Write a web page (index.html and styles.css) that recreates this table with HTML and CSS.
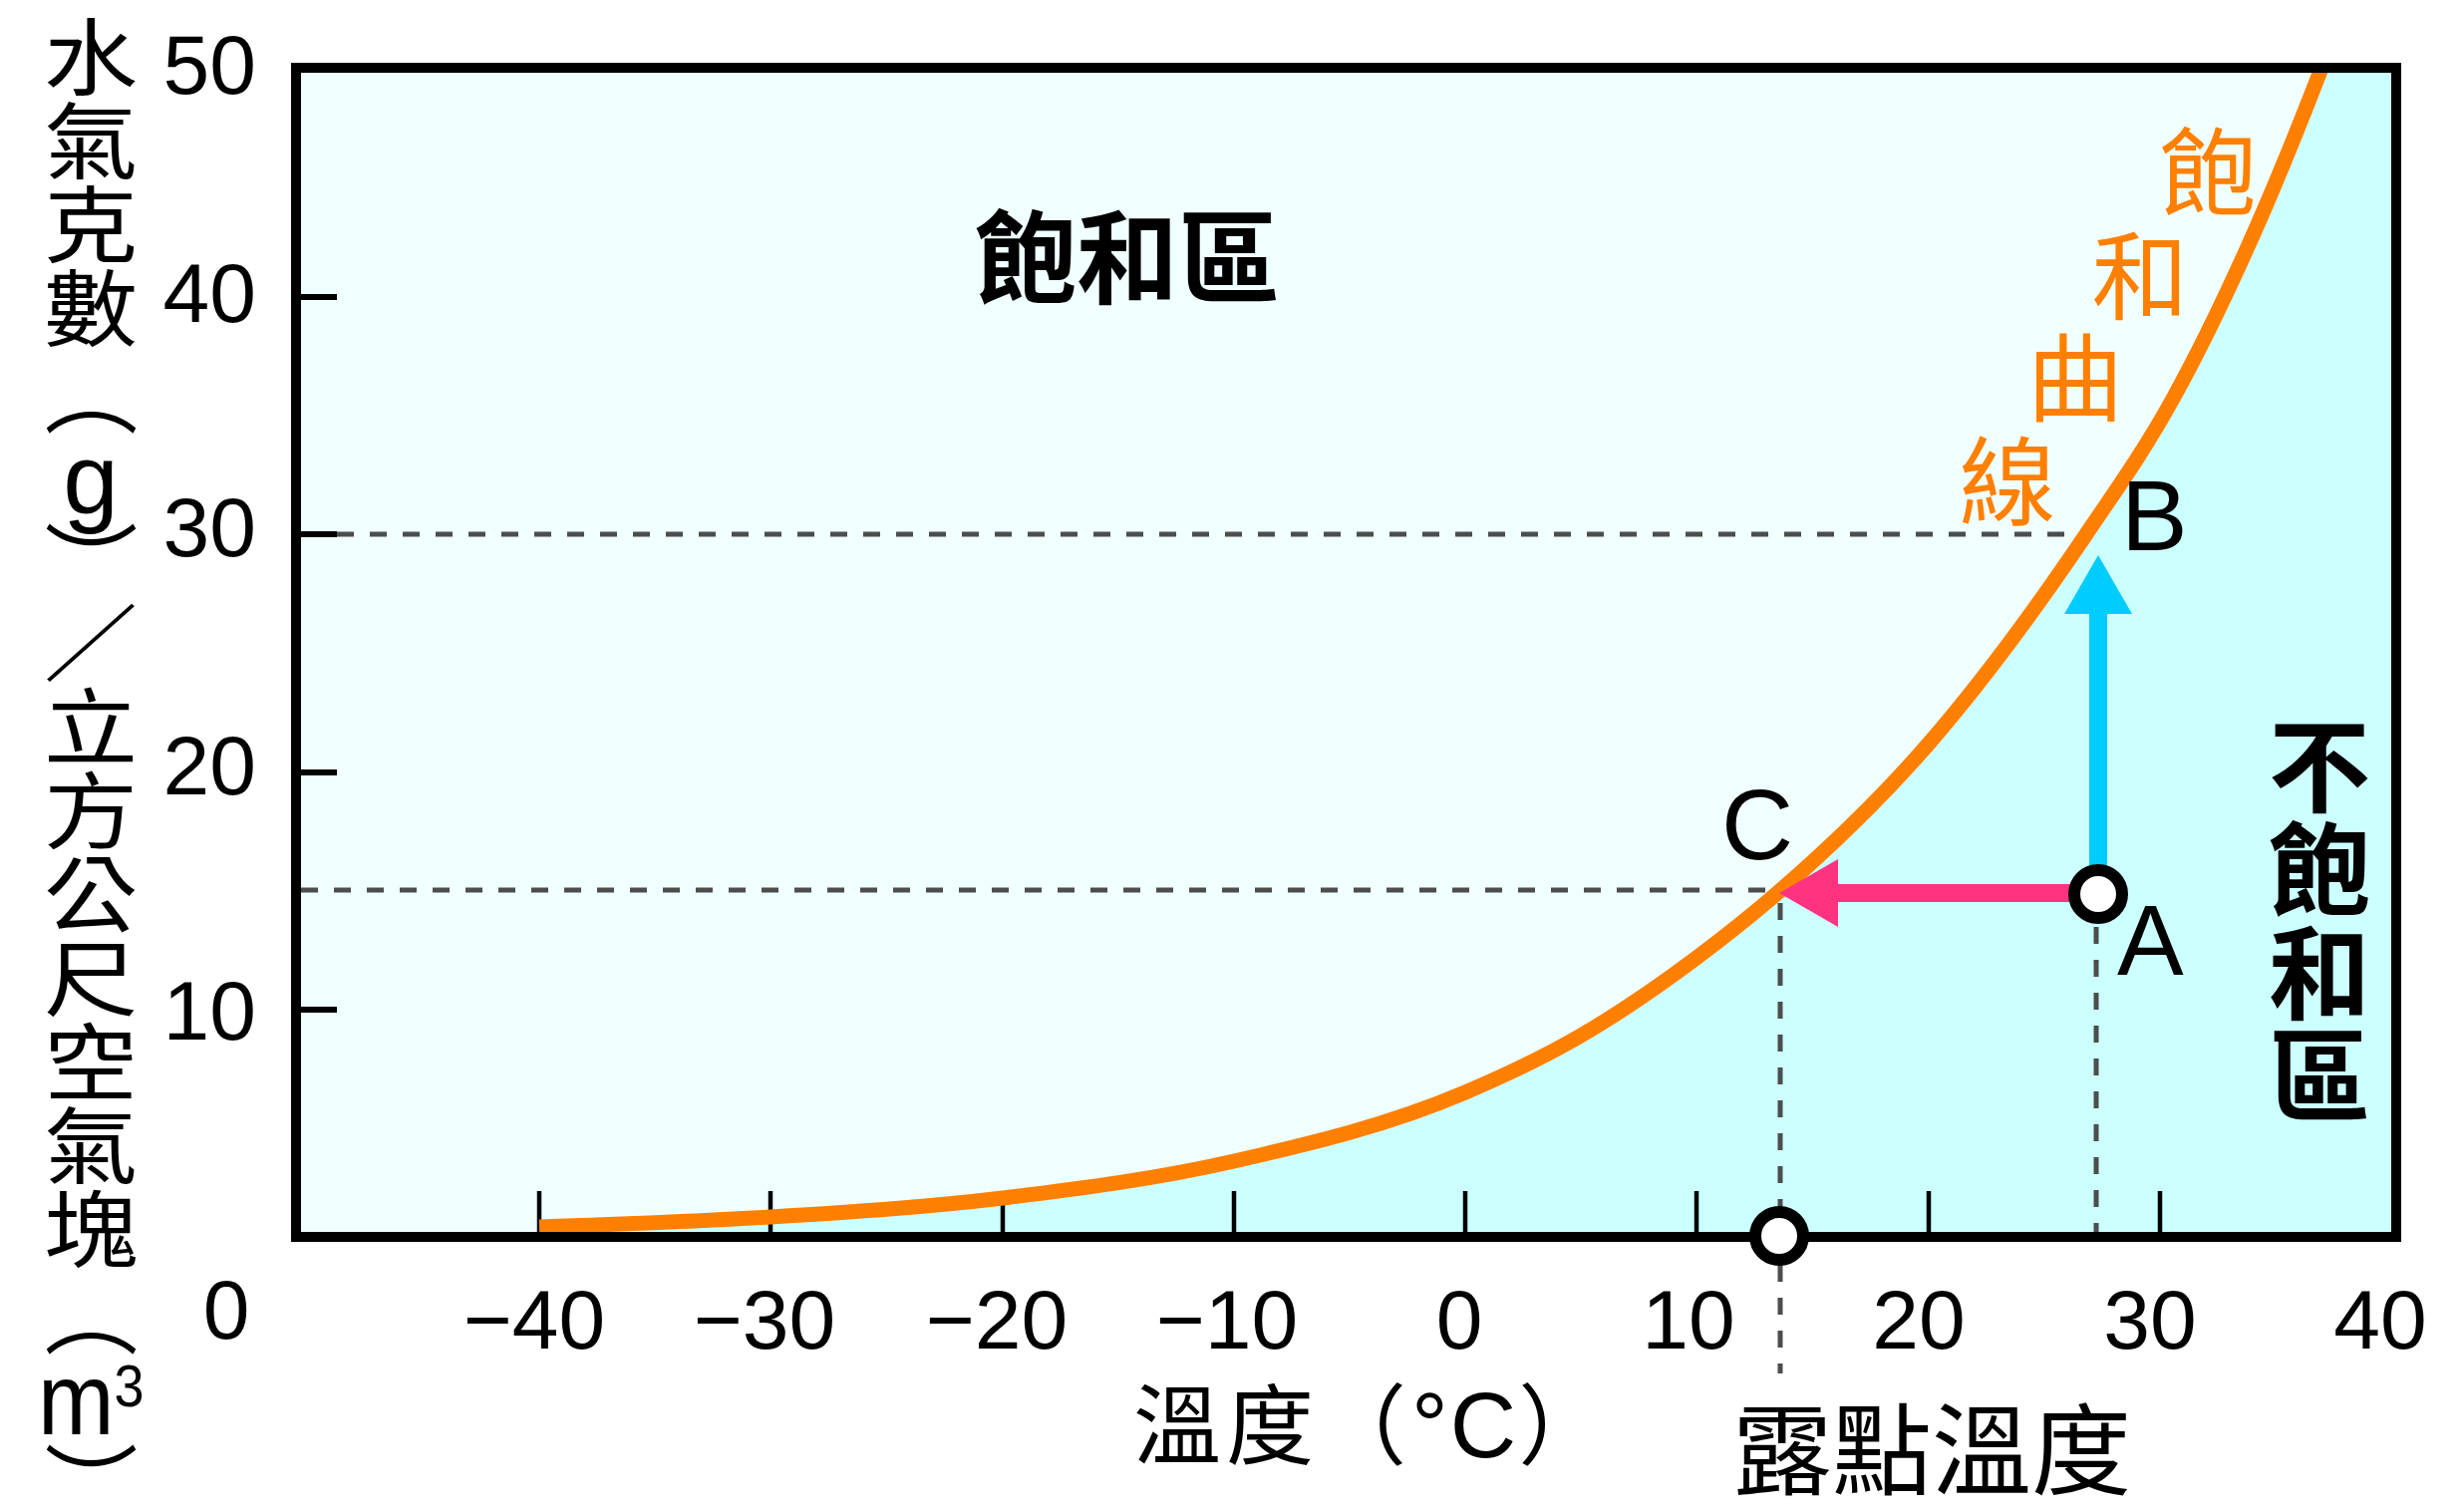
FILE: index.html
```html
<!DOCTYPE html>
<html lang="zh-Hant">
<head>
<meta charset="utf-8">
<title>飽和曲線</title>
<link rel="stylesheet" href="styles.css">
</head>
<body>
<div class="figure">
  <div class="ytitle">
    <span class="ch">水</span>
    <span class="ch">氣</span>
    <span class="ch">克</span>
    <span class="ch">數</span>
    <span class="ch vform">（</span>
    <span class="ch latin">g</span>
    <span class="ch vform">）</span>
    <span class="ch">／</span>
    <span class="ch">立</span>
    <span class="ch">方</span>
    <span class="ch">公</span>
    <span class="ch">尺</span>
    <span class="ch">空</span>
    <span class="ch">氣</span>
    <span class="ch">塊</span>
    <span class="ch vform">（</span>
    <span class="unit">m<span class="sup">3</span></span>
    <span class="ch vform last">）</span>
  </div>
  <svg class="chart" width="2321" height="1517" viewBox="150 0 2321 1517" xmlns="http://www.w3.org/2000/svg">
    <defs>
      <clipPath id="plot"><rect x="302" y="72" width="2097" height="1164"/></clipPath>
    </defs>

    <rect class="plot-bg" x="297" y="68" width="2107" height="1173"/>
    <path class="unsat" clip-path="url(#plot)" d="M541,1245 L541,1231 C618.3,1228.3 695.7,1225.8 773,1221 C850.7,1216.2 928.3,1211.4 1006,1202 C1083.3,1192.7 1160.7,1182.7 1238,1165 C1315.3,1147.3 1392.7,1129 1470,1096 C1508.7,1079.5 1547.3,1061.5 1586,1039 C1624.7,1016.5 1663.3,989.9 1702,961 C1730,940 1758,917.9 1786,893.5 C1835.7,850.3 1885.3,803.3 1935,746 C1987.7,685.2 2040.3,614 2093,536 C2122,493.1 2151,452.6 2180,400 C2204.7,355.3 2229.3,304.8 2254,250 C2278.7,195.2 2303.3,135.1 2328,71 L2345,27 L2420,27 L2420,1245 Z"/>

    <!-- guide lines -->
    <line class="guide" x1="338" y1="536" x2="2081" y2="536"/>
    <line class="guide" x1="302" y1="893" x2="1786" y2="893"/>
    <line class="guide" x1="1786" y1="906" x2="1786" y2="1378"/>
    <line class="guide" x1="2103" y1="930" x2="2103" y2="1236"/>

    <!-- ticks -->
    <line class="tick" x1="302" y1="298" x2="338" y2="298"/>
    <line class="tick" x1="302" y1="536" x2="338" y2="536"/>
    <line class="tick" x1="302" y1="775" x2="338" y2="775"/>
    <line class="tick" x1="302" y1="1013" x2="338" y2="1013"/>
    <line class="tick tick-x" x1="541" y1="1195" x2="541" y2="1236"/>
    <line class="tick tick-x" x1="773" y1="1195" x2="773" y2="1236"/>
    <line class="tick tick-x" x1="1006" y1="1195" x2="1006" y2="1236"/>
    <line class="tick tick-x" x1="1238" y1="1195" x2="1238" y2="1236"/>
    <line class="tick tick-x" x1="1470" y1="1195" x2="1470" y2="1236"/>
    <line class="tick tick-x" x1="1702" y1="1195" x2="1702" y2="1236"/>
    <line class="tick tick-x" x1="1935" y1="1195" x2="1935" y2="1236"/>
    <line class="tick tick-x" x1="2167" y1="1195" x2="2167" y2="1236"/>

    <!-- saturation curve -->
    <path class="curve" clip-path="url(#plot)" d="M541,1231 C618.3,1228.3 695.7,1225.8 773,1221 C850.7,1216.2 928.3,1211.4 1006,1202 C1083.3,1192.7 1160.7,1182.7 1238,1165 C1315.3,1147.3 1392.7,1129 1470,1096 C1508.7,1079.5 1547.3,1061.5 1586,1039 C1624.7,1016.5 1663.3,989.9 1702,961 C1730,940 1758,917.9 1786,893.5 C1835.7,850.3 1885.3,803.3 1935,746 C1987.7,685.2 2040.3,614 2093,536 C2122,493.1 2151,452.6 2180,400 C2204.7,355.3 2229.3,304.8 2254,250 C2278.7,195.2 2303.3,135.1 2328,71 L2345,27"/>

    <!-- frame -->
    <rect class="frame" x="297" y="68" width="2107" height="1173"/>

    <!-- arrows -->
    <line class="shaft-pink" x1="2105" y1="896" x2="1840" y2="896"/>
    <polygon class="head-pink" points="1785,896 1844,862 1844,930"/>
    <line class="shaft-cyan" x1="2105" y1="896" x2="2105" y2="612"/>
    <polygon class="head-cyan" points="2105,557 2071,616 2139,616"/>

    <!-- points -->
    <circle class="dot" cx="2105" cy="897" r="24"/>
    <circle class="dot" cx="1785" cy="1240" r="24"/>

    <!-- y tick labels -->
    <text class="num" x="257" y="94" text-anchor="end">50</text>
    <text class="num" x="257" y="323" text-anchor="end">40</text>
    <text class="num" x="257" y="558" text-anchor="end">30</text>
    <text class="num" x="257" y="797" text-anchor="end">20</text>
    <text class="num" x="257" y="1043" text-anchor="end">10</text>
    <text class="num" x="227" y="1343" text-anchor="middle">0</text>

    <!-- x tick labels -->
    <text class="num" x="536" y="1353" text-anchor="middle">−40</text>
    <text class="num" x="767" y="1353" text-anchor="middle">−30</text>
    <text class="num" x="1000" y="1353" text-anchor="middle">−20</text>
    <text class="num" x="1231" y="1353" text-anchor="middle">−10</text>
    <text class="num" x="1464" y="1353" text-anchor="middle">0</text>
    <text class="num" x="1694" y="1353" text-anchor="middle">10</text>
    <text class="num" x="1925" y="1353" text-anchor="middle">20</text>
    <text class="num" x="2157" y="1353" text-anchor="middle">30</text>
    <text class="num" x="2388" y="1353" text-anchor="middle">40</text>

    <!-- point labels -->
    <text class="letter" x="2124" y="978">A</text>
    <text class="letter" x="2128" y="552">B</text>
    <text class="letter" x="1727" y="862">C</text>

    <!-- region labels -->
    <text class="region" x="978" y="297">飽和區</text>
    <text class="region" x="2327" y="807" text-anchor="middle">不</text>
    <text class="region" x="2327" y="911" text-anchor="middle">飽</text>
    <text class="region" x="2327" y="1015" text-anchor="middle">和</text>
    <text class="region" x="2327" y="1118" text-anchor="middle">區</text>

    <!-- curve label -->
    <text class="curve-label" x="2215" y="209" text-anchor="middle">飽</text>
    <text class="curve-label" x="2147" y="313" text-anchor="middle">和</text>
    <text class="curve-label" x="2082" y="415" text-anchor="middle">曲</text>
    <text class="curve-label" x="2014" y="519" text-anchor="middle">線</text>

    <!-- axis titles -->
    <text class="axis-title" x="1137" y="1462">溫度（<tspan class="unit-c">°C</tspan>）</text>
    <text class="dew" x="1738" y="1492">露點溫度</text>
  </svg>
</div>
</body>
</html>
```

FILE: styles.css
```css
html, body {
  margin: 0;
  padding: 0;
  background: #ffffff;
  overflow: hidden;
}

.figure {
  display: flex;
  width: 2471px;
  height: 1517px;
}

.ytitle {
  width: 150px;
  flex: 0 0 150px;
  box-sizing: border-box;
  padding: 18px 0 0 32px;
  display: flex;
  flex-direction: column;
  align-items: center;
  font-family: "Liberation Sans", "Noto Sans CJK TC", sans-serif;
  font-size: 84px;
  color: #000;
}

.ytitle .ch {
  display: block;
  width: 84px;
  height: 84px;
  line-height: 84px;
  text-align: center;
  transform: scaleX(1.12);
}

.ytitle .vform {
  writing-mode: vertical-rl;
  font-family: "Noto Sans CJK TC", sans-serif;
}

.ytitle .vform.last {
  height: 60px;
}

.ytitle .latin {
  font-size: 100px;
  transform: none;
}

.ytitle .unit {
  display: block;
  height: 84px;
  line-height: 84px;
  font-size: 102px;
  white-space: nowrap;
  transform: scaleX(0.9);
}

.ytitle .sup {
  font-size: 60px;
  line-height: 0;
  vertical-align: 28px;
}

.chart {
  display: block;
  flex: 0 0 2321px;
}

.plot-bg { fill: #F0FFFF; }
.unsat { fill: #CCFFFF; }

.curve {
  fill: none;
  stroke: #FF8000;
  stroke-width: 15;
  stroke-linecap: butt;
}

.frame {
  fill: none;
  stroke: #000;
  stroke-width: 10;
}

.tick {
  stroke: #000;
  stroke-width: 6;
}
.tick-x { stroke-width: 4.5; }

.guide {
  fill: none;
  stroke: #4D4D4D;
  stroke-width: 5;
  stroke-dasharray: 17 16;
}

.shaft-pink { stroke: #FF3380; stroke-width: 18; }
.head-pink { fill: #FF3380; }
.shaft-cyan { stroke: #00CCFF; stroke-width: 18; }
.head-cyan { fill: #00CCFF; }

.dot {
  fill: #fff;
  stroke: #000;
  stroke-width: 12;
}

.num {
  font-family: "Liberation Sans", Arial, sans-serif;
  font-size: 84px;
  fill: #000;
}

.letter {
  font-family: "Liberation Sans", Arial, sans-serif;
  font-size: 100px;
  fill: #000;
}

.region {
  font-family: "Noto Sans CJK TC", sans-serif;
  font-weight: 700;
  font-size: 102px;
  fill: #000;
}

.curve-label {
  font-family: "Noto Sans CJK TC", sans-serif;
  font-weight: 400;
  font-size: 97px;
  fill: #FF8000;
}

.axis-title {
  font-family: "Liberation Sans", "Noto Sans CJK TC", sans-serif;
  font-size: 88px;
  letter-spacing: 5px;
  fill: #000;
}

.axis-title .unit-c {
  font-size: 92px;
  letter-spacing: 2px;
}

.dew {
  font-family: "Noto Sans CJK TC", sans-serif;
  font-size: 100px;
  fill: #000;
}
```
